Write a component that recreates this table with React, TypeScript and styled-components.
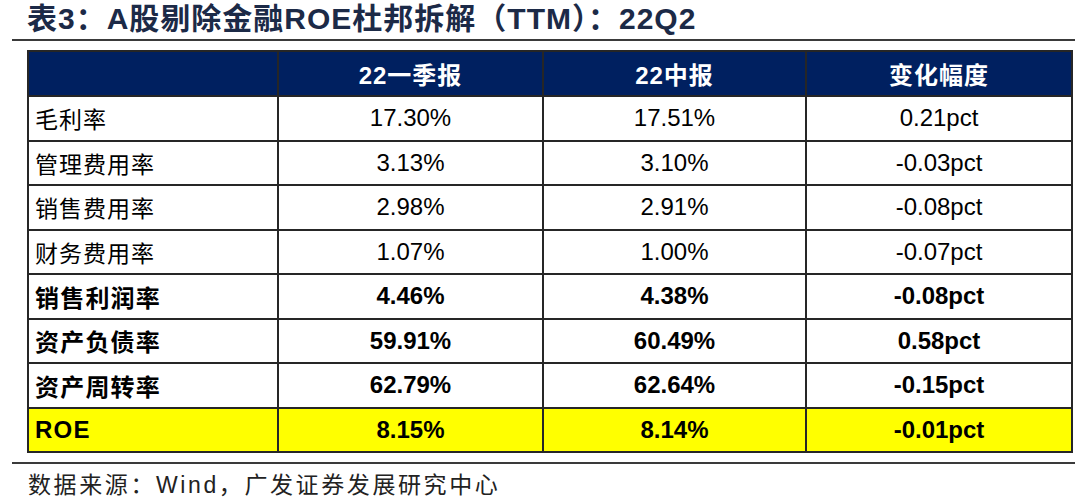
import React from "react";
import styled, { createGlobalStyle } from "styled-components";

const GlobalStyle = createGlobalStyle`
  html, body {
    margin: 0;
    padding: 0;
    background: #ffffff;
  }
  body {
    font-family: "Liberation Sans", "Noto Sans CJK SC", sans-serif;
  }
`;

const Page = styled.div`
  width: 1080px;
  height: 504px;
  padding-left: 12px;
  box-sizing: border-box;
  overflow: hidden;
`;

const Title = styled.h1`
  margin: 0;
  padding: 1px 0 0 15px;
  height: 39px;
  box-sizing: border-box;
  font-family: "Liberation Sans", "Noto Sans CJK SC", sans-serif;
  font-size: 30px;
  line-height: 36px;
  font-weight: 700;
  letter-spacing: 1px;
  color: #1c2a47;
  white-space: nowrap;
`;

const Rule = styled.div<{ $gap: number }>`
  width: 1063px;
  height: 2px;
  background: #3a3a3a;
  margin-top: ${(p) => p.$gap}px;
`;

const Table = styled.table`
  margin: 9px 0 0 15px;
  width: 1044px;
  border-collapse: collapse;
  table-layout: fixed;
  border: 2px solid #262626;
`;

const HeadRow = styled.tr`
  height: 45px;
  background: #002060;
`;

const BodyRow = styled.tr<{ $highlight?: boolean }>`
  height: 44.5px;
  background: ${(p) => (p.$highlight ? "#ffff00" : "#ffffff")};
`;

const HeadCell = styled.th`
  border: 2px solid #262626;
  padding: 0;
  color: #ffffff;
  font-size: 24px;
  font-weight: 700;
  letter-spacing: 1px;
  text-align: center;
  vertical-align: middle;
  font-family: "Liberation Sans", "Noto Sans CJK SC", sans-serif;
`;

const LabelCell = styled.td<{ $bold?: boolean }>`
  border: 2px solid #262626;
  padding: 0 0 0 6px;
  color: #000000;
  font-size: ${(p) => (p.$bold ? 24 : 23)}px;
  font-weight: ${(p) => (p.$bold ? 700 : 400)};
  letter-spacing: ${(p) => (p.$bold ? 1.2 : 1)}px;
  text-align: left;
  vertical-align: middle;
  font-family: "Liberation Sans", "Noto Sans CJK SC", sans-serif;
`;

const ValueCell = styled.td<{ $bold?: boolean }>`
  border: 2px solid #262626;
  padding: 0;
  color: #000000;
  font-size: 24px;
  font-weight: ${(p) => (p.$bold ? 700 : 400)};
  text-align: center;
  vertical-align: middle;
  font-family: "Liberation Sans", "Noto Sans CJK SC", sans-serif;
`;

const Footer = styled.p`
  margin: 6px 0 0 16px;
  font-size: 23px;
  line-height: 30px;
  letter-spacing: 2.6px;
  color: #222222;
  font-family: "Liberation Sans", "Noto Sans CJK SC", sans-serif;
  white-space: nowrap;
`;

type Row = {
  label: string;
  q1: string;
  h1: string;
  change: string;
  bold?: boolean;
  highlight?: boolean;
};

const rows: Row[] = [
  { label: "毛利率", q1: "17.30%", h1: "17.51%", change: "0.21pct" },
  { label: "管理费用率", q1: "3.13%", h1: "3.10%", change: "-0.03pct" },
  { label: "销售费用率", q1: "2.98%", h1: "2.91%", change: "-0.08pct" },
  { label: "财务费用率", q1: "1.07%", h1: "1.00%", change: "-0.07pct" },
  { label: "销售利润率", q1: "4.46%", h1: "4.38%", change: "-0.08pct", bold: true },
  { label: "资产负债率", q1: "59.91%", h1: "60.49%", change: "0.58pct", bold: true },
  { label: "资产周转率", q1: "62.79%", h1: "62.64%", change: "-0.15pct", bold: true },
  { label: "ROE", q1: "8.15%", h1: "8.14%", change: "-0.01pct", bold: true, highlight: true },
];

export default function App() {
  return (
    <>
      <GlobalStyle />
      <Page>
        <Title>表3：A股剔除金融ROE杜邦拆解（TTM）：22Q2</Title>
        <Rule $gap={0} />
        <Table>
          <colgroup>
            <col style={{ width: 250 }} />
            <col style={{ width: 265 }} />
            <col style={{ width: 263 }} />
            <col style={{ width: 266 }} />
          </colgroup>
          <thead>
            <HeadRow>
              <HeadCell />
              <HeadCell>22一季报</HeadCell>
              <HeadCell>22中报</HeadCell>
              <HeadCell>变化幅度</HeadCell>
            </HeadRow>
          </thead>
          <tbody>
            {rows.map((r) => (
              <BodyRow key={r.label} $highlight={r.highlight}>
                <LabelCell $bold={r.bold}>{r.label}</LabelCell>
                <ValueCell $bold={r.bold}>{r.q1}</ValueCell>
                <ValueCell $bold={r.bold}>{r.h1}</ValueCell>
                <ValueCell $bold={r.bold}>{r.change}</ValueCell>
              </BodyRow>
            ))}
          </tbody>
        </Table>
        <Rule $gap={9} />
        <Footer>数据来源：Wind，广发证券发展研究中心</Footer>
      </Page>
    </>
  );
}
